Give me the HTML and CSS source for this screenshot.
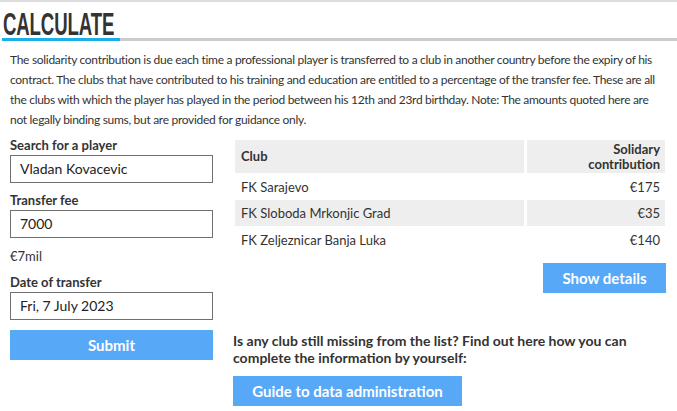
FILE: index.html
```html
<!DOCTYPE html>
<html>
<head>
<meta charset="utf-8">
<link rel="stylesheet" href="styles.css">
</head>
<body>
<div class="topline"></div>
<div class="page">
  <h2 class="title"><span class="title-text"><span class="title-inner">CALCULATE</span></span></h2>
  <p class="intro">The solidarity contribution is due each time a professional player is transferred to a club in another country before the expiry of his contract. The clubs that have contributed to his training and education are entitled to a percentage of the transfer fee. These are all the clubs with which the player has played in the period between his 12th and 23rd birthday. Note: The amounts quoted here are not legally binding sums, but are provided for guidance only.</p>
  <div class="calc">
    <form class="form">
      <label class="label">Search for a player</label>
      <div class="input">Vladan Kovacevic</div>
      <label class="label">Transfer fee</label>
      <div class="input">7000</div>
      <div class="hint">€7mil</div>
      <label class="label">Date of transfer</label>
      <div class="input">Fri, 7 July 2023</div>
      <div class="btn btn-full">Submit</div>
    </form>
    <div class="results">
      <table class="table">
        <thead>
          <tr><th class="c-club">Club</th><th class="c-amt">Solidary<br>contribution</th></tr>
        </thead>
        <tbody>
          <tr><td class="c-club">FK Sarajevo</td><td class="c-amt">€175</td></tr>
          <tr class="alt"><td class="c-club">FK Sloboda Mrkonjic Grad</td><td class="c-amt">€35</td></tr>
          <tr><td class="c-club">FK Zeljeznicar Banja Luka</td><td class="c-amt">€140</td></tr>
        </tbody>
      </table>
      <div class="details-row"><div class="btn btn-details">Show details</div></div>
      <p class="missing">Is any club still missing from the list? Find out here how you can complete the information by yourself:</p>
      <div class="btn btn-guide">Guide to data administration</div>
    </div>
  </div>
</div>
</body>
</html>
```
FILE: styles.css
```css
* { box-sizing: border-box; }
html, body { margin: 0; padding: 0; background: #fff; }
body {
  font-family: Lato, "Open Sans", sans-serif;
  color: #333;
  font-size: 13px;
}
.topline { height: 2px; background: #dddddd; }
.page { padding: 0 12px 0 10px; }
.title {
  margin: 10px -12px 0 -8px;
  padding: 0;
  border-bottom: 3px solid #cccccc;
  height: 29px;
  line-height: 25px;
}
.title-text {
  display: inline-block;
  width: 118px;
  height: 29px;
  padding-left: 1px;
  border-bottom: 3px solid #1aaeeb;
  white-space: nowrap;
}
.title-inner {
  display: inline-block;
  transform: scaleX(0.6);
  transform-origin: left center;
  font-family: "Liberation Sans", sans-serif;
  font-weight: 700;
  font-size: 31px;
  color: #333;
  letter-spacing: -0.2px;
}
.intro {
  margin: 9px 0 0 0;
  font-size: 12px;
  letter-spacing: -0.3px;
  line-height: 20px;
  color: #333;
}
.calc {
  display: grid;
  grid-template-columns: 203px 1fr;
  column-gap: 20px;
  margin-top: 10px;
}
.form { display: flex; flex-direction: column; margin-top: -3px; }
.label { font-weight: 700; font-size: 13px; line-height: 16px; margin-bottom: 2px; }
.input {
  height: 28px;
  border: 1px solid #707070;
  padding: 0 9px;
  font-size: 14px;
  line-height: 26px;
  color: #222;
  margin-bottom: 9px;
}
.hint { font-size: 13px; line-height: 16px; margin: 1px 0 10px; }
.btn {
  background: #58a8f8;
  color: #fff;
  font-weight: 700;
  font-size: 15px;
  height: 30px;
  line-height: 30px;
  text-align: center;
}
.btn-full { margin-top: 1px; }
.table {
  margin-left: 2px;
  width: calc(100% - 2px);
  border-collapse: collapse;
  font-size: 13px;
}
.table th { background: #eeeeee; font-weight: 700; font-size: 13px; height: 33px; line-height: 15px; }
.table td { height: 27px; }
.table .alt td { background: #eeeeee; height: 26px; }
.c-club { text-align: left; padding: 0 6px; border-right: 3px solid #fff; }
.c-amt { text-align: right; padding: 0 5px; width: 140px; }
.details-row { display: flex; justify-content: flex-end; margin: 10px -1px 0 0; }
.btn-details { width: 123px; }
.missing {
  margin: 39px 0 0 0;
  font-weight: 700;
  font-size: 14px;
  line-height: 17px;
}
.btn-guide { width: 229px; margin-top: 10px; }
```
